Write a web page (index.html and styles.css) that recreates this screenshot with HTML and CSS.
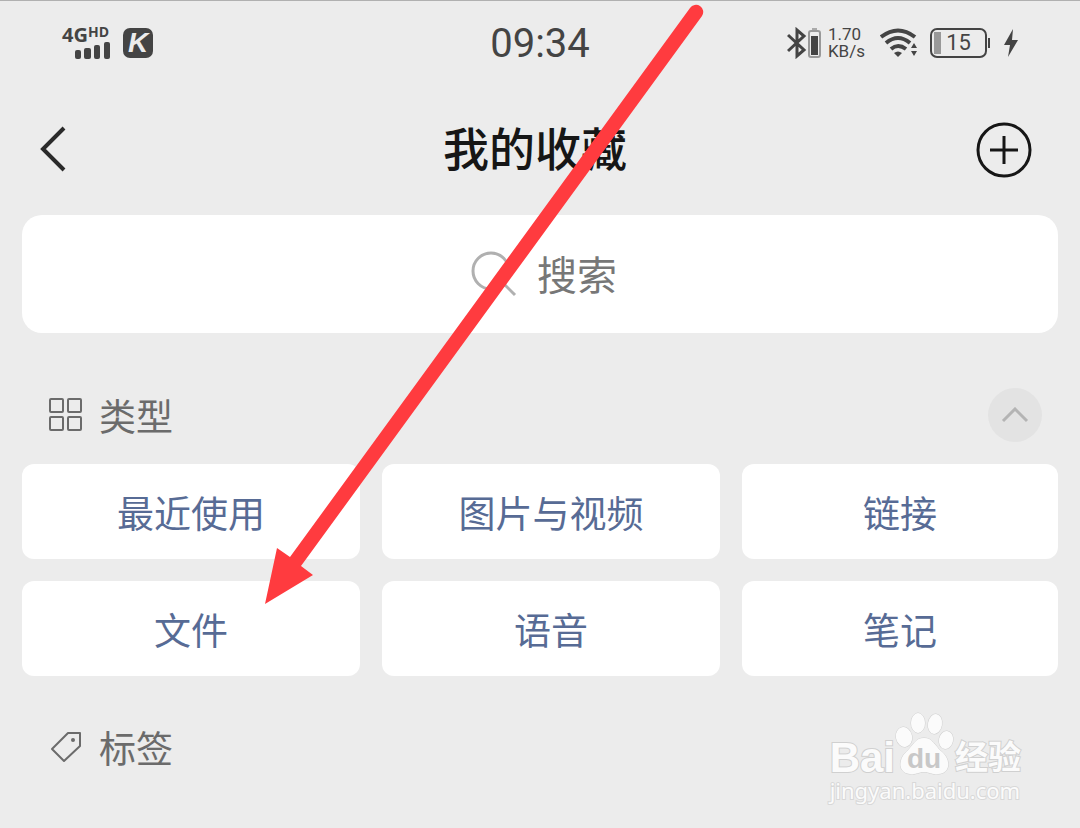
FILE: index.html
```html
<!DOCTYPE html>
<html lang="zh-Hans">
<head>
  <meta charset="UTF-8">
  <title>我的收藏</title>
  <meta name="viewport" content="width=device-width, initial-scale=1.0">
  <link rel="stylesheet" href="styles.css">
</head>
<body>
  <div class="status-bar">
    <div class="status-left">
      <div class="network">
        <div class="network-type">4G<span>HD</span></div>
        <svg class="signal" width="35" height="17" viewBox="0 0 35 17">
          <rect x="0" y="8" width="6" height="9" rx="2"/>
          <rect x="9" y="6" width="7" height="11" rx="2"/>
          <rect x="19" y="3" width="6" height="14" rx="2"/>
          <rect x="29" y="0" width="6" height="17" rx="2"/>
        </svg>
      </div>
      <span class="app-badge">K</span>
    </div>
    <time class="clock">09:34</time>
    <div class="status-right">
      <svg width="34" height="32" viewBox="0 0 34 32">
        <path d="M1 8 L17 23 L10 29 V3 L17 9 L1 24" fill="none" stroke="#444" stroke-width="3"/>
        <path d="M25 2 h5" stroke="#aaa" stroke-width="2"/>
        <rect x="22" y="4" width="11" height="26" rx="2" fill="none" stroke="#999" stroke-width="2"/>
        <rect x="24" y="9" width="7" height="19" fill="#444"/>
      </svg>
      <div class="speed"><span>1.70</span><span>KB/s</span></div>
      <svg class="wifi" width="38" height="30" viewBox="0 0 38 30">
        <g fill="none" stroke="#444" stroke-width="4">
          <path d="M1 9 Q18 -4 35 9"/>
          <path d="M6 15 Q18 5 30 15"/>
          <path d="M11 21 Q18 15 26 21"/>
        </g>
        <path d="M14 25 Q18 22 22 25 L18 29 Z M31 20 l3 -5 3 5 Z M31 23 h6 l-3 5 Z" fill="#444"/>
      </svg>
      <div class="battery"><span>15</span></div>
      <svg class="bolt" width="14" height="28" viewBox="0 0 14 28">
        <path d="M9 0 L0 16 H6 L4 28 L14 11 H8 Z" fill="#444"/>
      </svg>
    </div>
  </div>

  <header class="header">
    <button class="icon-button" aria-label="返回">
      <svg width="28" height="48" viewBox="0 0 28 48">
        <path d="M26 2 L5 23 L26 44" fill="none" stroke="#2a2a2a" stroke-width="4"/>
      </svg>
    </button>
    <h1>我的收藏</h1>
    <button class="icon-button" aria-label="添加">
      <svg width="56" height="56" viewBox="0 0 56 56">
        <g fill="none" stroke="#161616" stroke-width="3">
          <circle cx="28" cy="28" r="26"/>
          <path d="M28 14 V42 M14 28 H42"/>
        </g>
      </svg>
    </button>
  </header>

  <main>
    <label class="search">
      <svg width="46" height="46" viewBox="0 0 46 46">
        <g fill="none" stroke="#b0b0b0" stroke-width="3">
          <circle cx="20" cy="20" r="18"/>
          <path d="M32 32 L44 44"/>
        </g>
      </svg>
      <input type="text" placeholder="搜索" aria-label="搜索">
    </label>

    <section>
      <div class="section-title">
        <svg width="34" height="34" viewBox="0 0 34 34">
          <g fill="none" stroke="#6b6b6b" stroke-width="2">
            <rect x="1" y="1" width="13" height="13" rx="1"/>
            <rect x="19" y="1" width="13" height="13" rx="1"/>
            <rect x="1" y="19" width="13" height="13" rx="1"/>
            <rect x="19" y="19" width="13" height="13" rx="1"/>
          </g>
        </svg>
        <h2>类型</h2>
        <button class="collapse" aria-label="收起">
          <svg width="28" height="16" viewBox="0 0 28 16">
            <path d="M2 14 L14 2 L26 14" fill="none" stroke="#b4b4b4" stroke-width="3"/>
          </svg>
        </button>
      </div>
      <div class="types">
        <button>最近使用</button>
        <button>图片与视频</button>
        <button>链接</button>
        <button>文件</button>
        <button>语音</button>
        <button>笔记</button>
      </div>
    </section>

    <section>
      <div class="section-title tags-title">
        <svg width="34" height="34" viewBox="0 0 34 34">
          <path d="M19 3 H31 V16 L15 31 L3 19 Z" fill="none" stroke="#6b6b6b" stroke-width="2" stroke-linejoin="round"/>
          <circle cx="24" cy="10" r="2" fill="#6b6b6b"/>
        </svg>
        <h2>标签</h2>
      </div>
    </section>
  </main>

  <!-- 指向“文件”的箭头 -->
  <svg class="arrow" width="720" height="620" viewBox="0 0 720 620">
    <path d="M265 604 L277 548 L290 557 L690 8 A7 7 0 0 1 702 16 L301 566 L313 575 Z" fill="#ff3b3f"/>
  </svg>

  <div class="watermark">
    <div class="brand">
      <span class="brand-bai">Bai</span>
      <svg width="60" height="64" viewBox="0 0 60 64">
        <g fill="#fbfbfb" stroke="#d0d0d0" stroke-width="1">
          <ellipse cx="9" cy="25" rx="8" ry="10" transform="rotate(-12 9 25)"/>
          <ellipse cx="23" cy="11" rx="7" ry="10"/>
          <ellipse cx="40" cy="12" rx="7" ry="10" transform="rotate(10 40 12)"/>
          <ellipse cx="51" cy="28" rx="7" ry="9" transform="rotate(12 51 28)"/>
          <path d="M29 26 C38 26 40 34 46 39 C57 48 55 62 43 62 C37 63 34 60 29 60 C24 60 21 63 15 62 C3 61 3 48 11 40 C18 34 20 26 29 26 Z"/>
        </g>
        <text x="29" y="56" class="brand-du">du</text>
      </svg>
      <span class="brand-name">经验</span>
    </div>
    <div class="site">jingyan.baidu.com</div>
  </div>
</body>
</html>
```
FILE: styles.css
```css
* {
  box-sizing: border-box;
}

body {
  position: relative;
  margin: 0;
  min-height: 100vh;
  background: #ececec;
  border-top: 1px solid #b0b0b0;
  font-family: Roboto, "Noto Sans CJK SC", sans-serif;
  color: #444;
}

button {
  border: none;
  padding: 0;
  background: none;
  font-family: inherit;
  cursor: pointer;
}

svg {
  display: block;
  flex-shrink: 0;
}

/* 状态栏 */
.status-bar {
  display: grid;
  grid-template-columns: 1fr auto 1fr;
  align-items: center;
  height: 84px;
  padding: 0 62px;
}

.status-left,
.status-right {
  display: flex;
  align-items: center;
}

.status-left {
  gap: 13px;
}

.status-right {
  justify-content: flex-end;
}

.network-type {
  display: flex;
  font-family: "Open Sans", sans-serif;
  font-size: 20px;
  font-weight: 700;
  line-height: 14px;
}

.network-type span {
  font-size: 14px;
  line-height: 8px;
}

.signal {
  margin-left: 13px;
  fill: #444;
}

.app-badge {
  width: 30px;
  height: 30px;
  border-radius: 7px;
  background: #444;
  color: #ececec;
  font-family: "Liberation Sans", sans-serif;
  font-size: 28px;
  font-style: italic;
  font-weight: 700;
  line-height: 30px;
  text-align: center;
}

.clock {
  font-size: 40px;
}

.speed {
  display: flex;
  flex-direction: column;
  margin-left: 7px;
  font-size: 17px;
  line-height: 17px;
}

.wifi {
  margin-left: 15px;
}

.battery {
  position: relative;
  width: 57px;
  height: 30px;
  margin-left: 12px;
  border: 2px solid #444;
  border-radius: 7px;
  background: linear-gradient(#999, #999) 2px 2px / 7px 22px no-repeat;
  font-size: 22px;
  line-height: 26px;
  text-align: center;
}

.battery::after {
  content: "";
  position: absolute;
  top: 8px;
  right: -5px;
  width: 2px;
  height: 10px;
  background: #444;
}

.bolt {
  margin-left: 17px;
}

/* 标题栏 */
.header {
  display: flex;
  align-items: center;
  justify-content: space-between;
  height: 130px;
  padding: 0 48px 0 38px;
}

.header .icon-button {
  display: flex;
  width: 56px;
}

.header h1 {
  margin: 0;
  color: #161616;
  font-size: 46px;
  font-weight: 500;
  line-height: 56px;
}

main {
  padding: 0 22px;
}

.search {
  display: flex;
  align-items: center;
  justify-content: center;
  gap: 20px;
  height: 118px;
  padding-left: 8px;
  border-radius: 20px;
  background: #fff;
}

.search input {
  width: 80px;
  border: none;
  outline: none;
  padding: 4px 0 0;
  background: none;
  color: #333;
  font-family: inherit;
  font-size: 40px;
}

.search input::placeholder {
  color: #777;
  opacity: 1;
}

.section-title {
  display: flex;
  align-items: center;
  gap: 16px;
  height: 96px;
  margin-top: 35px;
  padding: 0 16px 2px 27px;
}

.section-title h2 {
  margin: 0;
  color: #6b6b6b;
  font-size: 37px;
  font-weight: 400;
}

.collapse {
  display: flex;
  align-items: center;
  justify-content: center;
  width: 54px;
  height: 54px;
  margin-left: auto;
  border-radius: 50%;
  background: #e3e3e3;
}

/* 类型 */
.types {
  display: grid;
  grid-template-columns: 338fr 338fr 316fr;
  gap: 22px;
}

.types button {
  height: 95px;
  border-radius: 12px;
  background: #fff;
  color: #576b95;
  font-size: 37px;
}

.tags-title {
  margin-top: 24px;
}

.arrow {
  position: absolute;
  top: -1px;
  left: 0;
  pointer-events: none;
}

/* 水印 */
.watermark {
  position: absolute;
  top: 711px;
  right: 59px;
  color: #fbfbfb;
  -webkit-text-stroke: 2px #d0d0d0;
  paint-order: stroke fill;
}

.brand {
  display: flex;
  align-items: flex-end;
}

.brand-bai {
  font-family: "Liberation Sans", sans-serif;
  font-size: 42px;
  font-weight: 700;
  line-height: 36px;
}

.brand-du {
  fill: #c8c8c8;
  font-family: "Liberation Sans", sans-serif;
  font-size: 28px;
  font-weight: 700;
  stroke: none;
  -webkit-text-stroke: 0;
  text-anchor: middle;
}

.brand-name {
  font-size: 33px;
  font-weight: 700;
  line-height: 36px;
}

.site {
  font-family: "Noto Sans", sans-serif;
  font-size: 22px;
  line-height: 28px;
  -webkit-text-stroke: 2px #d8d8d8;
}
```
